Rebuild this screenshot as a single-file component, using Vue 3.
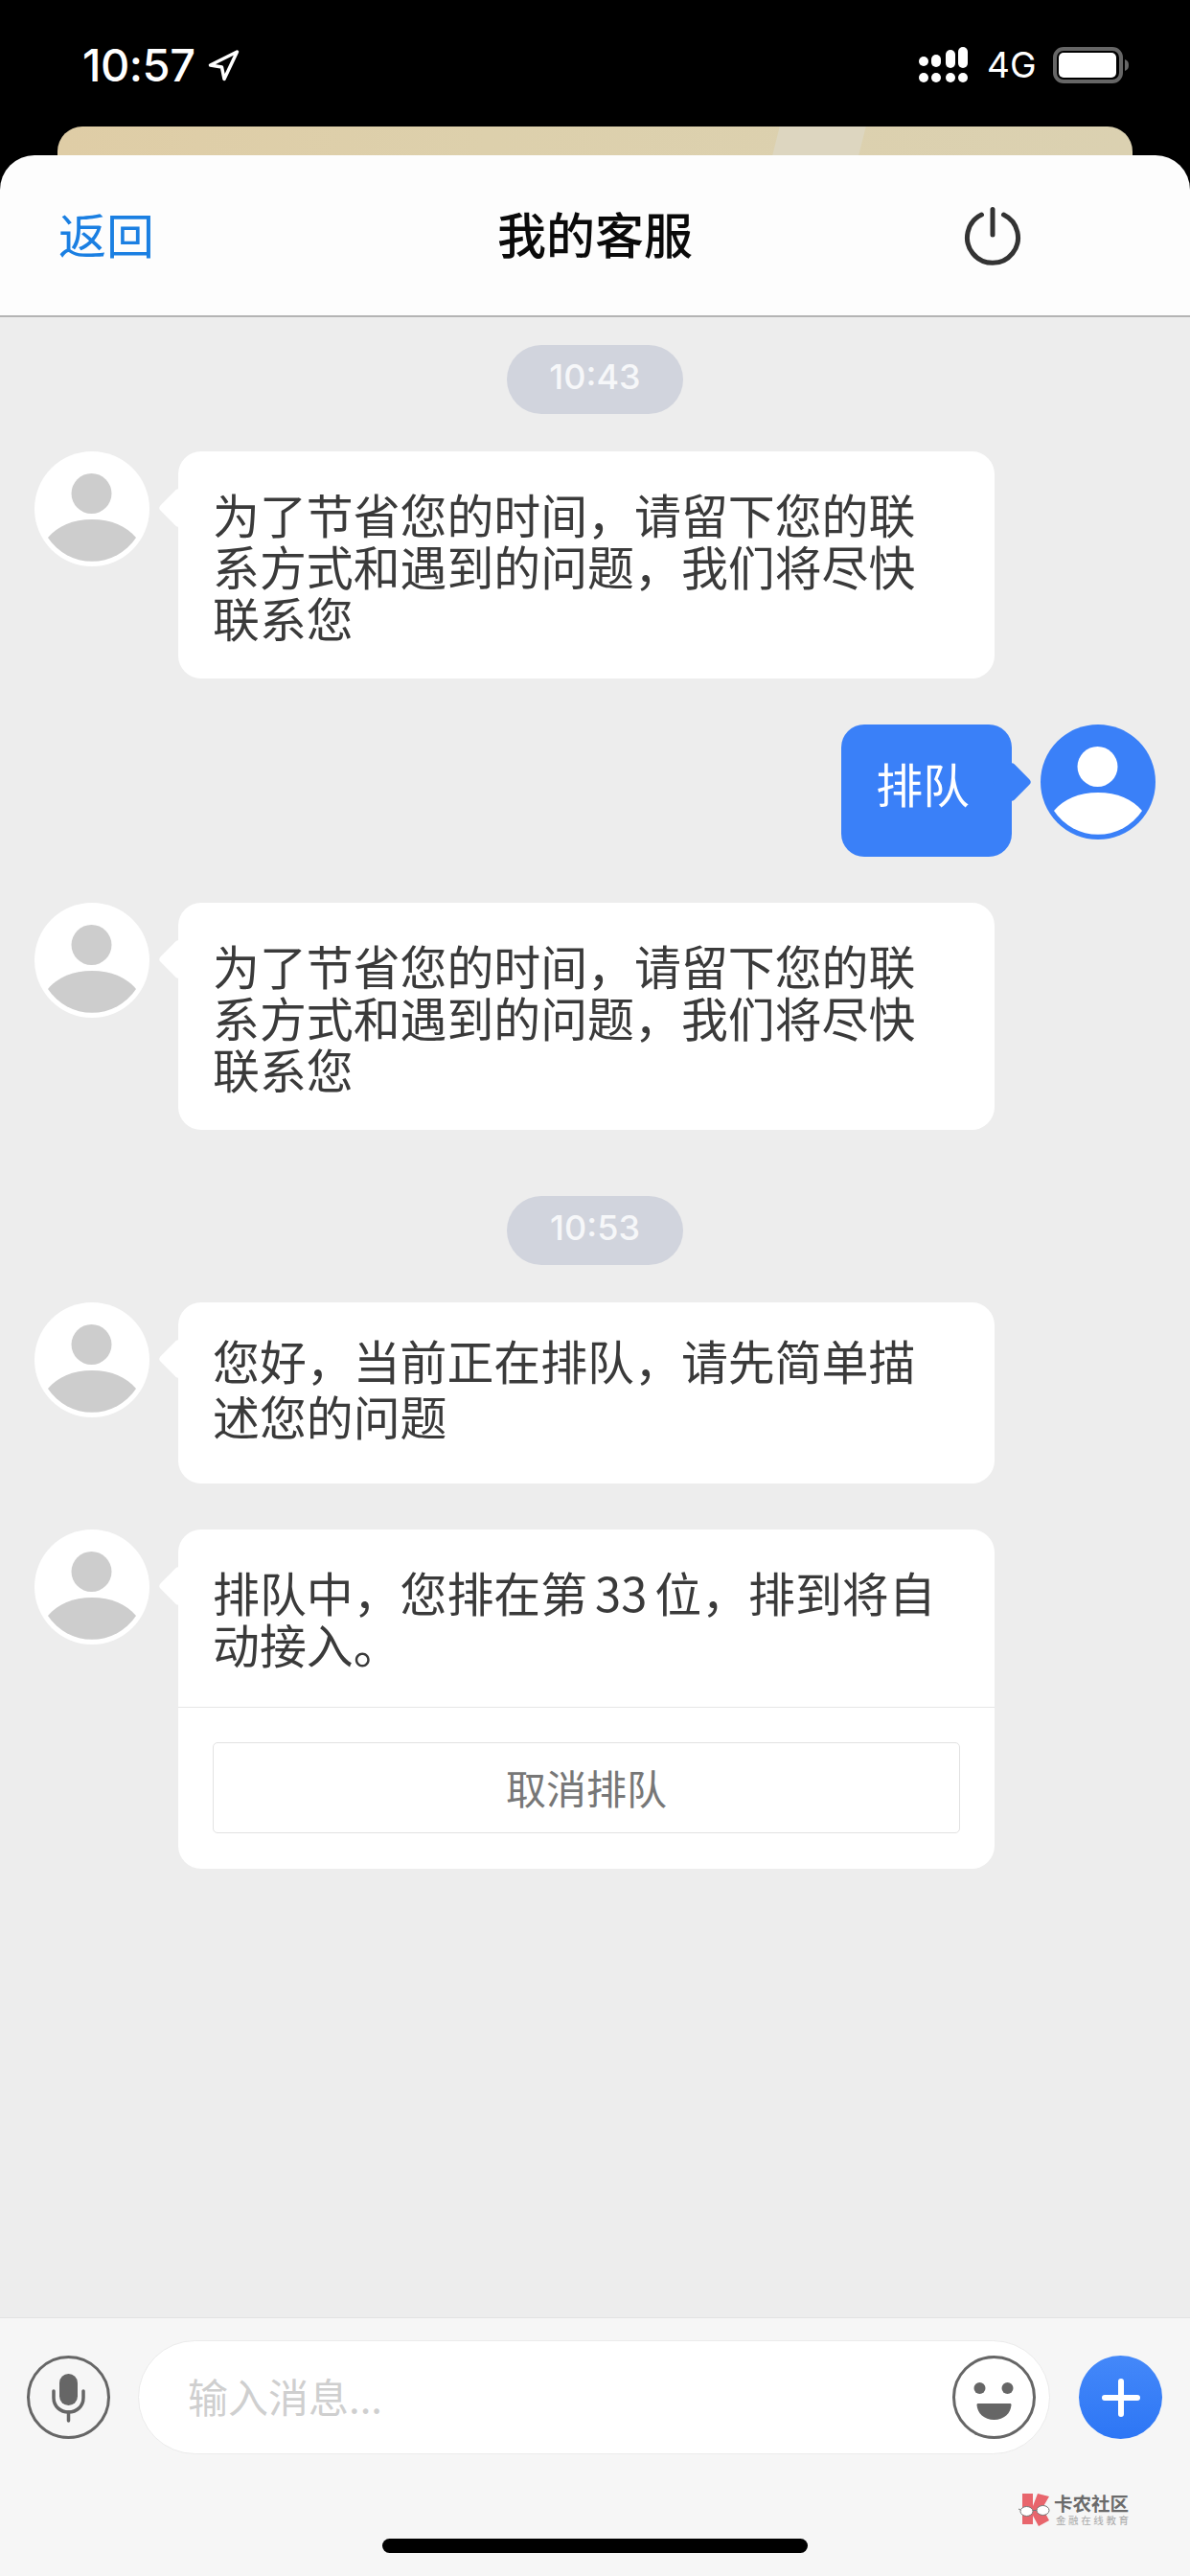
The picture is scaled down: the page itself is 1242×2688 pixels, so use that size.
<script setup>
const signalBars = [
  { x: 959, y: 59, h: 10 },
  { x: 972, y: 57, h: 13 },
  { x: 987, y: 52, h: 19 },
  { x: 1000, y: 49, h: 22 },
]
const messages = [
  { id: 1, type: 'time', text: '10:43', gap: 'first' },
  { id: 2, type: 'in', text: '为了节省您的时间，请留下您的联系方式和遇到的问题，我们将尽快联系您' },
  { id: 3, type: 'out', text: '排队' },
  { id: 4, type: 'in', text: '为了节省您的时间，请留下您的联系方式和遇到的问题，我们将尽快联系您' },
  { id: 5, type: 'time', text: '10:53', gap: 'later' },
  { id: 6, type: 'in', text: '您好，当前正在排队，请先简单描述您的问题', loose: true },
  { id: 7, type: 'in', text: '排队中，您排在第 33 位，排到将自动接入。', action: '取消排队' },
]
</script>

<template>
  <div class="phone">
    <div class="status">
      <div class="clock">
        <span>10:57</span>
        <svg class="loc" viewBox="0 0 34 34" width="34" height="34">
          <path d="M31.500 3 L3.500 17 L15.500 19 L18 31.500 Z" fill="none" stroke="#fff" stroke-width="3.500" stroke-linejoin="round" />
        </svg>
      </div>
      <div class="status-right">
        <svg class="signal" viewBox="959 49 52 38" width="52" height="38">
          <rect v-for="b in signalBars" :key="b.x" :x="b.x" :y="b.y" width="10" :height="b.h" rx="5" fill="#fff" />
          <circle v-for="b in signalBars" :key="'d' + b.x" :cx="b.x + 5" cy="81" r="5" fill="#fff" />
        </svg>
        <span class="net">4G</span>
        <svg class="battery" viewBox="0 0 80 38" width="80" height="38">
          <rect x="2" y="2" width="69" height="34" rx="9" fill="none" stroke="#666" stroke-width="4" />
          <rect x="6" y="6" width="60" height="26" rx="5" fill="#fff" />
          <path d="M75 13 C78 14 79 16 79 19 C79 22 78 24 75 25 Z" fill="#666" />
        </svg>
      </div>
    </div>
    <div class="peek"><i class="peek-shine"></i></div>

    <header class="bar">
      <span class="back">返回</span>
      <h1 class="title">我的客服</h1>
      <svg class="power" viewBox="0 0 60 62" width="60" height="62">
        <path d="M18.500 9 A26.500 26.500 0 1 0 41.500 9" fill="none" stroke="#333" stroke-width="5" stroke-linecap="round" />
        <path d="M30 3.500 V30" stroke="#333" stroke-width="5" stroke-linecap="round" />
      </svg>
    </header>

    <main class="chat">
      <template v-for="m in messages" :key="m.id">
        <div v-if="m.type === 'time'" class="stamp" :class="m.gap">{{ m.text }}</div>
        <div v-else class="row" :class="m.type">
          <div class="bubble" :class="{ 'has-action': m.action, loose: m.loose }">
            <p class="txt">{{ m.text }}</p>
            <div v-if="m.action" class="action"><button class="cancel">{{ m.action }}</button></div>
          </div>
          <svg class="avatar" viewBox="0 0 120 120" width="120" height="120">
            <circle cx="60" cy="60" r="60" class="av-bg" />
            <circle cx="59.500" cy="44" r="21" class="av-fg" />
            <path d="M14 90 C24 78 40 71 60 71 C80 71 96 78 106 90 A55 55 0 0 1 14 90 Z" class="av-fg" />
          </svg>
        </div>
      </template>
    </main>

    <footer class="input-bar">
      <div class="tools">
        <svg class="tool" viewBox="0 0 87 87" width="87" height="87">
          <circle cx="43.500" cy="43.500" r="42" fill="none" stroke="#666" stroke-width="3" />
          <rect x="34" y="19" width="19" height="33" rx="9.500" fill="#666" />
          <path d="M28 37 V44 C28 53 35 59 43.500 59 C52 59 59 53 59 44 V37" fill="none" stroke="#666" stroke-width="3.500" stroke-linecap="round" />
          <path d="M43.500 59 V68" stroke="#666" stroke-width="3.500" stroke-linecap="round" />
        </svg>
        <div class="field">
          <span class="placeholder">输入消息...</span>
          <svg class="tool" viewBox="0 0 87 87" width="87" height="87">
            <circle cx="43.500" cy="43.500" r="42" fill="none" stroke="#666" stroke-width="3" />
            <circle cx="28.500" cy="34" r="6" fill="#666" />
            <circle cx="57.500" cy="34" r="6" fill="#666" />
            <path d="M27 50 H60 C61 50 61.500 50.500 61.500 51.500 C61 60 54 67 43.500 67 C33 67 26 60 25.500 51.500 C25.500 50.500 26 50 27 50 Z" fill="#666" />
          </svg>
        </div>
        <div class="plus">
          <svg viewBox="0 0 40 40" width="40" height="40">
            <path d="M20 3 V37 M3 20 H37" stroke="#fff" stroke-width="6" stroke-linecap="round" />
          </svg>
        </div>
      </div>
      <div class="home"></div>
      <div class="mark">
        <svg viewBox="0 0 38 36" width="38" height="36">
          <path d="M5 1 H16 V14 L21 1 L33 4 L26 16 L33 29 L22 35 L16 24 V33 H5 Z" fill="#e8656c" />
          <ellipse cx="9.500" cy="19.500" rx="6.500" ry="5" fill="#fff" stroke="#777" stroke-width="1" />
          <ellipse cx="26.500" cy="18.500" rx="6.500" ry="5" fill="#fff" stroke="#777" stroke-width="1" />
          <path d="M16 18.500 H20 M3 18 L1 17" stroke="#777" stroke-width="1" />
        </svg>
        <div class="mark-text">
          <b>卡农社区</b>
          <small>金融在线教育</small>
        </div>
      </div>
    </footer>
  </div>
</template>

<style>
html, body { margin: 0; padding: 0; background: #000; }
</style>

<style scoped>
.phone {
  width: 1242px;
  height: 2688px;
  display: flex;
  flex-direction: column;
  background: #000;
  overflow: hidden;
  font-family: "Noto Sans CJK SC", "Liberation Sans", sans-serif;
}
.status {
  height: 132px;
  flex: none;
  display: flex;
  justify-content: space-between;
  align-items: flex-start;
  padding: 49px 63px 0 86px;
  box-sizing: border-box;
  color: #fff;
}
.clock {
  display: flex;
  align-items: center;
  gap: 12px;
  height: 37px;
  font: 500 47px/37px Inter, sans-serif;
  letter-spacing: -0.5px;
}
.loc { flex: none; }
.status-right {
  display: flex;
  align-items: center;
  height: 38px;
}
.signal { flex: none; display: block; }
.net {
  margin: 0 17px 0 19px;
  font: 400 37px/38px Inter, sans-serif;
  width: 52px;
}
.battery { flex: none; display: block; }
.peek {
  position: relative;
  height: 30px;
  flex: none;
  margin: 0 60px;
  border-radius: 26px 26px 0 0;
  background: linear-gradient(90deg, #dfcda6 0%, #ddd0ac 40%, #dbd1b1 100%);
  overflow: hidden;
}
.peek-shine {
  position: absolute;
  left: 750px;
  top: 0;
  width: 90px;
  height: 30px;
  background: #ddd6c0;
  transform: skewX(-14deg);
}
.bar {
  height: 169px;
  flex: none;
  box-sizing: border-box;
  display: grid;
  grid-template-columns: 1fr auto 1fr;
  align-items: center;
  padding: 0 61px;
  background: #fdfdfd;
  border-radius: 36px 36px 0 0;
  border-bottom: 2px solid #b4b4b4;
}
.back { font-size: 50px; color: #1a7fe2; line-height: 60px; margin-bottom: 6px; }
.title {
  margin: 0 0 6px;
  font-size: 51px;
  font-weight: 500;
  color: #0a0a0a;
  line-height: 60px;
}
.power { justify-self: end; margin-right: 115px; }
.chat {
  flex: 1;
  min-height: 0;
  background: #ededed;
  display: flex;
  flex-direction: column;
  padding: 0 36px;
}
.stamp {
  align-self: center;
  width: 184px;
  height: 72px;
  border-radius: 36px;
  background: #d1d4dd;
  color: #f6f7f9;
  text-align: center;
  font: 500 36px/67px Inter, sans-serif;
  margin-bottom: 39px;
}
.stamp.first { margin-top: 29px; }
.stamp.later { margin-top: 21px; }
.row {
  display: flex;
  gap: 30px;
  margin-bottom: 48px;
  align-items: flex-start;
}
.row.in { flex-direction: row-reverse; justify-content: flex-end; }
.row.out { justify-content: flex-end; }
.avatar { flex: none; display: block; }
.row.in .av-bg { fill: #fff; }
.row.in .av-fg { fill: #cdcdcd; }
.row.out .av-bg { fill: #3a80f8; }
.row.out .av-fg { fill: #fff; }
.bubble {
  position: relative;
  border-radius: 24px;
}
.bubble::before {
  content: "";
  position: absolute;
  top: 44px;
  width: 30px;
  height: 30px;
  border-radius: 4px;
  transform: rotate(45deg);
}
.row.in .bubble {
  width: 852px;
  background: #fff;
  color: #3a3a3a;
  padding: 38px 46px 37px 36px;
  box-sizing: border-box;
}
.row.in .bubble::before { left: -15px; background: #fff; }
.row.out .bubble {
  background: #3a80f8;
  color: #fff;
  padding: 34px 44px 50px 36px;
}
.row.out .bubble::before { right: -15px; top: 45px; background: #3a80f8; }
.row.in .bubble.loose { padding-top: 31px; padding-bottom: 42px; }
.bubble.loose .txt { line-height: 58px; }
.row.in .bubble.has-action { padding-bottom: 0; padding-right: 0; }
.txt {
  position: relative;
  margin: 0;
  max-width: 770px;
  font-size: 48.900px;
  line-height: 54px;
  word-spacing: -3px;
}
.action {
  margin: 39px 0 0 -36px;
  padding: 36px 36px 37px;
  border-top: 1px solid #e6e6e6;
}
.cancel {
  display: block;
  width: 100%;
  height: 95px;
  padding: 0 0 2px;
  box-sizing: border-box;
  background: #fff;
  border: 1px solid #e2e2e2;
  border-radius: 5px;
  color: #777;
  font-family: inherit;
  font-size: 42px;
  line-height: 90px;
}
.input-bar {
  position: relative;
  height: 270px;
  flex: none;
  box-sizing: border-box;
  background: #f6f6f6;
  border-top: 1px solid #e3e3e3;
}
.tools {
  display: flex;
  align-items: center;
  height: 119px;
  margin-top: 23px;
  padding: 0 29px 0 28px;
}
.tool { flex: none; display: block; }
.field {
  flex: 1;
  height: 119px;
  margin: 0 30px 0 29px;
  padding: 0 14px 0 51px;
  box-sizing: border-box;
  display: flex;
  align-items: center;
  justify-content: space-between;
  background: #fff;
  border: 1px solid #ebebeb;
  border-radius: 60px;
}
.placeholder { color: #cfcfcf; font-size: 42px; line-height: 60px; margin-bottom: 4px; }
.plus {
  width: 87px;
  height: 87px;
  flex: none;
  border-radius: 50%;
  display: flex;
  align-items: center;
  justify-content: center;
  background: linear-gradient(180deg, #4488f9, #2d76f5);
}
.home {
  position: absolute;
  left: 399px;
  top: 230px;
  width: 444px;
  height: 15px;
  border-radius: 8px;
  background: #000;
}
.mark {
  position: absolute;
  left: 1062px;
  top: 182px;
  display: flex;
  gap: 0;
  align-items: flex-start;
}
.mark-text { display: flex; flex-direction: column; margin-top: 1px; }
.mark-text b {
  font-size: 19.500px;
  line-height: 19px;
  font-weight: 700;
  color: #6b6b6b;
}
.mark-text small {
  margin: 2px 0 0 2px;
  font-size: 10.500px;
  line-height: 13px;
  letter-spacing: 2.600px;
  color: #a8a8a8;
  white-space: nowrap;
}
</style>
